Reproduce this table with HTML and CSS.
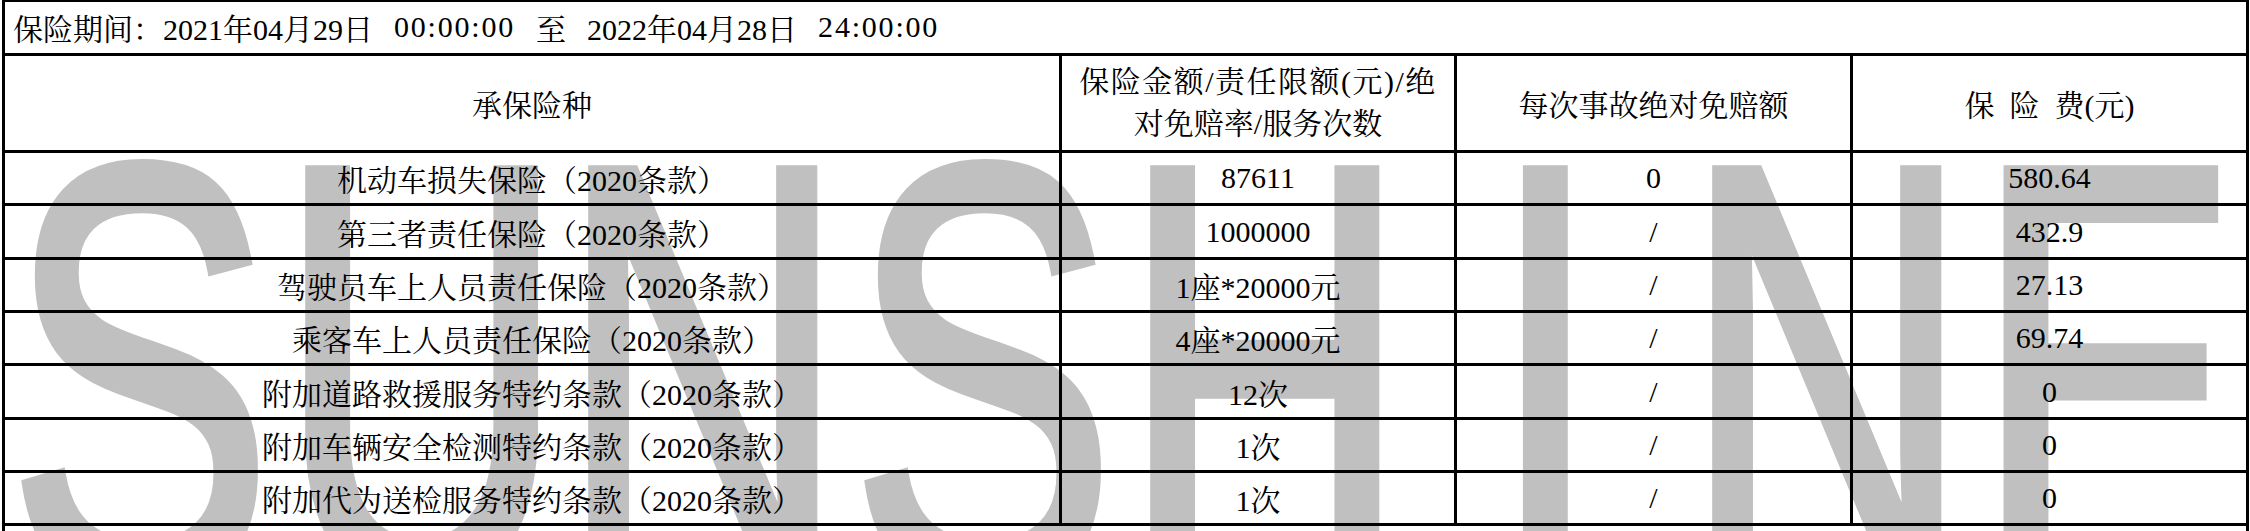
FILE: index.html
```html
<!DOCTYPE html>
<html lang="zh-CN">
<head>
<meta charset="utf-8">
<title>保险期间</title>
<link rel="stylesheet" href="styles.css">
</head>
<body>
<div class="page">
  <div class="watermark" aria-hidden="true">
    <span class="wm-cell"><span class="wm-letter">S</span></span>
    <span class="wm-cell"><span class="wm-letter">U</span></span>
    <span class="wm-cell"><span class="wm-letter">N</span></span>
    <span class="wm-cell"><span class="wm-letter">S</span></span>
    <span class="wm-cell"><span class="wm-letter">H</span></span>
    <span class="wm-cell"><span class="wm-letter">I</span></span>
    <span class="wm-cell"><span class="wm-letter">N</span></span>
    <span class="wm-cell"><span class="wm-letter">E</span></span>
  </div>
  <div class="sheet">
    <div class="cell period">保险期间：2021年04月29日 <span class="time">00:00:00</span> 至 2022年04月28日 <span class="time">24:00:00</span></div>

    <div class="cell head">承保险种</div>
    <div class="cell head"><span class="lines"><span class="wide">保险金额/责任限额(元)/绝</span><br>对免赔率/服务次数</span></div>
    <div class="cell head">每次事故绝对免赔额</div>
    <div class="cell head spaced">保 险 费(元)</div>

    <div class="cell">机动车损失保险（2020条款）</div>
    <div class="cell">87611</div>
    <div class="cell">0</div>
    <div class="cell">580.64</div>

    <div class="cell">第三者责任保险（2020条款）</div>
    <div class="cell">1000000</div>
    <div class="cell">/</div>
    <div class="cell">432.9</div>

    <div class="cell">驾驶员车上人员责任保险（2020条款）</div>
    <div class="cell">1座*20000元</div>
    <div class="cell">/</div>
    <div class="cell">27.13</div>

    <div class="cell">乘客车上人员责任保险（2020条款）</div>
    <div class="cell">4座*20000元</div>
    <div class="cell">/</div>
    <div class="cell">69.74</div>

    <div class="cell">附加道路救援服务特约条款（2020条款）</div>
    <div class="cell">12次</div>
    <div class="cell">/</div>
    <div class="cell">0</div>

    <div class="cell">附加车辆安全检测特约条款（2020条款）</div>
    <div class="cell">1次</div>
    <div class="cell">/</div>
    <div class="cell">0</div>

    <div class="cell">附加代为送检服务特约条款（2020条款）</div>
    <div class="cell">1次</div>
    <div class="cell">/</div>
    <div class="cell">0</div>

    <div class="cell tail"></div>
  </div>
</div>
</body>
</html>
```

FILE: styles.css
```css
html, body {
  margin: 0;
  padding: 0;
  background: #fff;
  overflow: hidden;
}

.page {
  position: relative;
  width: 2250px;
  height: 531px;
  overflow: hidden;
}

.watermark {
  position: absolute;
  left: 0;
  top: 76px;
  z-index: 0;
  display: flex;
  font-family: "Liberation Sans", Arial, sans-serif;
  font-weight: normal;
  font-size: 600px;
  line-height: 1;
  color: #c0c0c0;
  -webkit-text-stroke: 12px #c0c0c0;
}

.wm-cell {
  width: 281px;
  display: flex;
  justify-content: center;
}

.wm-letter {
  display: inline-block;
  transform: scaleX(0.66);
}

.sheet {
  position: relative;
  z-index: 1;
  margin-left: 2px;
  width: 2247px;
  box-sizing: border-box;
  border-left: 3px solid #000;
  border-top: 2px solid #000;
  display: grid;
  grid-template-columns: 1057px 395px 396px 396px;
  grid-template-rows: 53.7px 97.5px repeat(7, 53.3px) 40px;
  font-family: "Liberation Serif", "Noto Serif CJK SC", "Noto Sans CJK SC", serif;
  font-size: 30px;
  color: #000;
}

.cell {
  box-sizing: border-box;
  border-right: 3px solid #000;
  border-bottom: 3px solid #000;
  display: flex;
  align-items: center;
  justify-content: center;
  text-align: center;
  white-space: pre;
}

.period {
  grid-column: 1 / -1;
  justify-content: flex-start;
  padding-left: 8px;
  word-spacing: 0.45em;
}

.time {
  letter-spacing: 0.06em;
}

.lines {
  display: block;
  line-height: 42px;
}

.wide {
  letter-spacing: 0.05em;
}

.spaced {
  word-spacing: 0.25em;
}

.tail {
  grid-column: 1 / -1;
}
```
